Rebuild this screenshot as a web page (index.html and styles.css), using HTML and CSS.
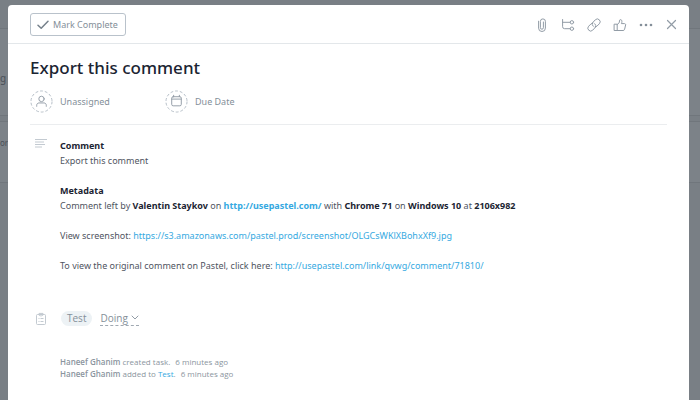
FILE: index.html
```html
<!DOCTYPE html>
<html lang="en">
<head>
<meta charset="utf-8">
<meta name="viewport" content="width=device-width, initial-scale=1">
<title>Export this comment</title>
<link rel="stylesheet" href="styles.css">
</head>
<body>
<div class="backdrop" aria-hidden="true">
  <div class="band band-top"></div>
  <div class="band band-title"><span>g</span></div>
  <div class="band band-gap"></div>
  <div class="band band-row"><span>or</span></div>
</div>
<main class="dialog">
  <header class="toolbar">
    <button class="complete" type="button">
      <svg width="12" height="10" viewBox="0 0 12 10"><path d="M1 5.2 4.2 8.3 11 1.2" stroke-width="1.5"/></svg>
      Mark Complete
    </button>
    <div class="actions">
      <button type="button" aria-label="Attach"><svg width="14" height="14" viewBox="0 0 14 14"><path d="M3.600 3.200v6.900a3.400 3.400 0 0 0 6.800 0V3.400a2.500 2.500 0 0 0-5 0v6.300a1.500 1.500 0 0 0 3 0V4"/></svg></button>
      <button type="button" aria-label="Subtasks"><svg width="14" height="14" viewBox="0 0 14 14"><path d="M1.600 1.500v7.200a2 2 0 0 0 2 2h5.600M1.600 4.300h7.600"/><circle cx="10.900" cy="4.300" r="1.700"/><circle cx="10.900" cy="10.700" r="1.700"/></svg></button>
      <button type="button" aria-label="Copy link"><svg width="14" height="14" viewBox="0 0 14 14"><path d="M6.200 8.300a2.800 2.800 0 0 1-.4-3.800l2.500-2.700a2.800 2.800 0 0 1 4 4L9.800 8.300a2.600 2.600 0 0 1-1.700.8M7.800 5.700a2.800 2.800 0 0 1 .4 3.800l-2.500 2.700a2.800 2.800 0 0 1-4-4l2.500-2.500a2.600 2.600 0 0 1 1.700-.8"/></svg></button>
      <button type="button" aria-label="Like"><svg width="14" height="14" viewBox="0 0 14 14"><path d="M1.500 6.200h2.700v6.300H1.500ZM4.200 6.500c1.600-.8 2.300-1.900 2.300-3.600 0-.8.4-1.300 1-1.300.9 0 1.400.8 1.400 1.900 0 .8-.2 1.500-.5 2.100h3.100c.8 0 1.300.6 1.100 1.400l-1 4.300c-.2.8-.7 1.200-1.500 1.200H4.200"/></svg></button>
      <button type="button" aria-label="More"><svg width="14" height="14" viewBox="0 0 14 14"><g class="dots"><circle cx="2" cy="7" r="1.300"/><circle cx="7" cy="7" r="1.300"/><circle cx="12" cy="7" r="1.300"/></g></svg></button>
      <button type="button" aria-label="Close"><svg width="14" height="14" viewBox="0 0 14 14"><path d="m2.500 2.500 8 8m0-8-8 8" stroke-width="1.200"/></svg></button>
    </div>
  </header>
  <section class="summary">
    <h1>Export this comment</h1>
    <div class="fields">
      <button class="field" type="button">
        <svg width="23" height="23" viewBox="0 0 24 24"><circle class="dash" cx="12" cy="12" r="11"/><circle cx="12" cy="9.300" r="2.800"/><path d="M7 17v-1c0-1.500 1-2.500 2.500-2.500h5c1.500 0 2.500 1 2.500 2.500v1"/></svg>
        Unassigned
      </button>
      <button class="field" type="button">
        <svg width="23" height="23" viewBox="0 0 24 24"><circle class="dash" cx="12" cy="12" r="11"/><rect x="7" y="7" width="10" height="9.500" rx="1.500"/><path d="M7 9.500h10M9 5.500V7m6-1.500V7"/></svg>
        Due Date
      </button>
    </div>
  </section>
  <section class="row description">
    <svg class="lead" width="12" height="10" viewBox="0 0 12 10"><path d="M0 1.500h12M0 4h9M0 6.500h10M0 9h7"/></svg>
    <div class="text">
      <p><b>Comment</b><br>Export this comment</p>
      <p><b>Metadata</b><br>Comment left by <b>Valentin Staykov</b> on <b><a href="#pastel">http://usepastel.com/</a></b> with <b>Chrome 71</b> on <b>Windows 10</b> at <b>2106x982</b></p>
      <p>View screenshot: <a href="#screenshot">https://s3.amazonaws.com/pastel.prod/screenshot/OLGCsWKlXBohxXf9.jpg</a></p>
      <p>To view the original comment on Pastel, click here: <a href="#comment">http://usepastel.com/link/qvwg/comment/71810/</a></p>
    </div>
  </section>
  <section class="row project">
    <svg class="lead" width="12" height="14" viewBox="0 0 12 14"><rect x="1.500" y="2.500" width="9" height="10" rx="1"/><path d="M4 2.500V1.400h4v1.100c0 .8-.5 1.300-1.200 1.300H5.200C4.500 3.800 4 3.300 4 2.500ZM3.500 6.500h1m1 0h3m-5 3h1m1 0h3"/></svg>
    <a class="pill" href="#test">Test</a>
    <button class="status" type="button">Doing <svg width="8" height="6" viewBox="0 0 8 6"><path d="m1 1 3 3 3-3"/></svg></button>
  </section>
  <section class="log">
    <p><b>Haneef Ghanim</b> created task. <time>6 minutes ago</time></p>
    <p><b>Haneef Ghanim</b> added to <a href="#test">Test</a>. <time>6 minutes ago</time></p>
  </section>
</main>
</body>
</html>
```
FILE: styles.css
```css
* { box-sizing: border-box; }
body {
  margin: 0;
  min-height: 100vh;
  padding: 5px 11px 0 8px;
  display: flex;
  background: #797f85;
  font-family: "Noto Sans", "Open Sans", sans-serif;
  font-size: 9px;
  line-height: 15px;
  color: #50555f;
}
p, h1 { margin: 0; }
a { color: #35a9e1; text-decoration: none; }
button {
  margin: 0;
  padding: 0;
  border: 0;
  background: none;
  font: inherit;
  color: #848f99;
  cursor: pointer;
}
svg { display: block; flex: none; fill: none; stroke: #929ca6; stroke-linecap: round; stroke-linejoin: round; }

.backdrop { position: absolute; inset: 0; overflow: hidden; color: #4a5058; }
.band { border-bottom: 1px solid #70767c; }
.band-top { height: 29px; }
.band-title { height: 87px; padding-top: 42px; font-size: 10px; background: #7c8288; }
.band-gap { height: 6px; }
.band-row { height: 61px; padding-top: 13px; font-size: 8px; background: #7c8288; }

.dialog {
  position: relative;
  flex: 1;
  min-width: 0;
  background: #fff;
  border-radius: 4px 4px 0 0;
}
.toolbar {
  display: flex;
  align-items: center;
  justify-content: space-between;
  padding: 8px 10px 7px 22px;
  border-bottom: 1px solid #e3e7ea;
}
.complete {
  display: flex;
  align-items: center;
  gap: 4px;
  height: 23px;
  padding: 0 7px 0 6px;
  border: 1px solid #b9c2cb;
  border-radius: 3px;
}
.complete svg { stroke: #76818b; }
.actions { display: flex; gap: 12px; }
.dots { fill: #848f99; stroke: none; }

.summary { margin: 0 22px; padding: 12px 0 11px; border-bottom: 1px solid #ebedef; }
h1 { font-size: 17px; line-height: 24px; font-weight: 500; color: #1b2432; }
.fields { display: flex; margin-top: 10px; }
.field { display: flex; align-items: center; gap: 7px; width: 135px; }
.dash { stroke: #b3bcc5; stroke-dasharray: 3 2; stroke-linecap: butt; }

.row { display: flex; margin: 0 22px; }
.lead { stroke: #c3cad1; stroke-linecap: butt; }
.description { padding: 13px 0 0 5px; gap: 13px; }
.description b { color: #1b2432; }
.text p + p { margin-top: 15px; }
.project { align-items: center; padding: 38px 0 0 5px; }
.pill, .status { font-family: "Open Sans", sans-serif; font-size: 10px; }
.pill { margin-left: 14px; padding: 0 6px; border-radius: 8px; background: #edf2f5; color: #848f99; }
.status { display: flex; align-items: center; gap: 3px; margin-left: 8px; border-bottom: 1px dashed #a0a9b2; line-height: 14px; }
.log { margin: 30px 22px 20px 52px; font-family: "Open Sans", sans-serif; font-size: 8px; line-height: 12px; color: #8b959e; }
.log b { font-weight: 600; }
time { margin-left: 3px; }
```
